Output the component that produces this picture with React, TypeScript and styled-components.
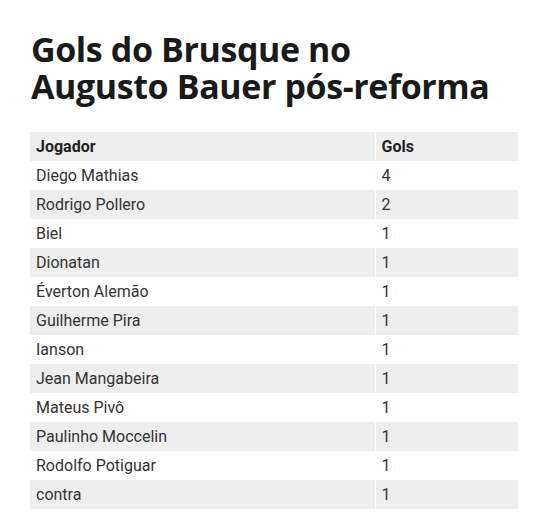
import styled, { createGlobalStyle } from 'styled-components';

const GlobalStyle = createGlobalStyle`
  body {
    margin: 0;
    background: #ffffff;
    font-family: Roboto, "Liberation Sans", sans-serif;
  }
`;

const Page = styled.div`
  padding: 31px 31px 0 30px;
`;

const Title = styled.h1`
  margin: 0 0 27px 1px;
  font-family: "Open Sans", "Noto Sans", sans-serif;
  font-weight: 700;
  font-size: 34px;
  line-height: 37px;
  color: #1a1a1a;
  letter-spacing: -0.4px;
  white-space: nowrap;
`;

const Table = styled.table`
  width: 488px;
  border-collapse: collapse;
  font-size: 16px;
  color: #333333;
`;

const Row = styled.tr<{ $shaded: boolean }>`
  background: ${(p) => (p.$shaded ? '#eeeeee' : '#ffffff')};
`;

const HeadCell = styled.th<{ $first?: boolean }>`
  height: 29px;
  padding: 0 6px;
  text-align: left;
  font-weight: 700;
  color: #222222;
  border-right: ${(p) => (p.$first ? '1px solid #ffffff' : 'none')};
  width: ${(p) => (p.$first ? '345px' : 'auto')};
  box-sizing: border-box;
`;

const Cell = styled.td<{ $first?: boolean }>`
  height: 29px;
  padding: 0 6px;
  border-right: ${(p) => (p.$first ? '1px solid #ffffff' : 'none')};
  box-sizing: border-box;
`;

const goals: [string, number][] = [
  ['Diego Mathias', 4],
  ['Rodrigo Pollero', 2],
  ['Biel', 1],
  ['Dionatan', 1],
  ['Éverton Alemão', 1],
  ['Guilherme Pira', 1],
  ['Ianson', 1],
  ['Jean Mangabeira', 1],
  ['Mateus Pivô', 1],
  ['Paulinho Moccelin', 1],
  ['Rodolfo Potiguar', 1],
  ['contra', 1],
];

export default function App() {
  return (
    <>
      <GlobalStyle />
      <Page>
        <Title>
          Gols do Brusque no
          <br />
          Augusto Bauer pós-reforma
        </Title>
        <Table>
          <thead>
            <Row $shaded>
              <HeadCell $first>Jogador</HeadCell>
              <HeadCell>Gols</HeadCell>
            </Row>
          </thead>
          <tbody>
            {goals.map(([name, n], i) => (
              <Row key={name} $shaded={i % 2 === 1}>
                <Cell $first>{name}</Cell>
                <Cell>{n}</Cell>
              </Row>
            ))}
          </tbody>
        </Table>
      </Page>
    </>
  );
}
